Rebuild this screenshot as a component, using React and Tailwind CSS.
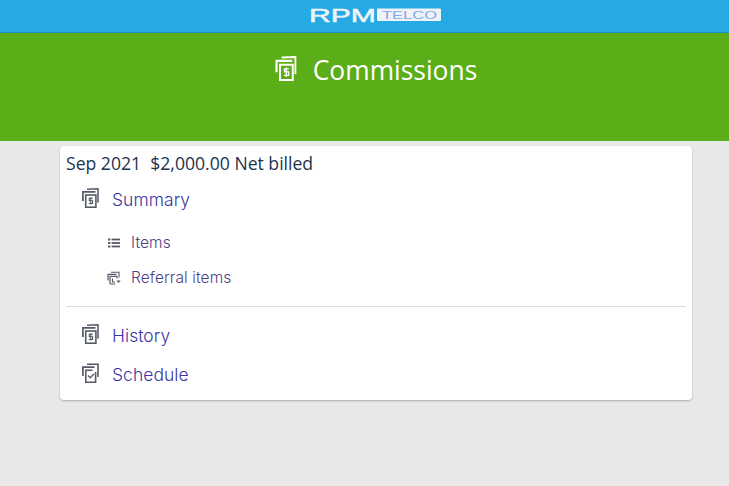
const MoneyStack = ({ className }) => (
  <svg className={className} viewBox="0 0 17 20" fill="none" stroke="currentColor">
    <path d="M5 1.2L16 0.8V14.5" strokeWidth="1.5" />
    <path d="M0.9 13V3.9H13.5" strokeWidth="1.7" />
    <rect x="3.7" y="7" width="10.2" height="12.2" strokeWidth="1.6" />
    <path d="M10.8 10.3H7.3v2.4h3.3v2.8H6.8M8.8 9.2v7.4" strokeWidth="1.1" />
  </svg>
);

const CheckStack = ({ className }) => (
  <svg className={className} viewBox="0 0 17 20" fill="none" stroke="currentColor">
    <path d="M5 1.2H16V14" strokeWidth="1.6" />
    <path d="M0.9 13V4.2H12.5" strokeWidth="1.7" />
    <path d="M13.6 9V19.2H3.8V7.2H10.5" strokeWidth="1.6" />
    <path d="M6 12.5l2.3 2.2 3.5-3.6" strokeWidth="1.4" />
  </svg>
);

const ReferralStack = ({ className }) => (
  <svg className={className} viewBox="0 0 14 14" fill="none" stroke="currentColor">
    <path d="M4 1.2H12V6.5" strokeWidth="1.1" />
    <path d="M1 9.5V3.3H9.5" strokeWidth="1.2" />
    <path d="M3 13V5.4H10V7.5M3 13H8" strokeWidth="1.2" />
    <path d="M5.5 7.5V11H8" strokeWidth="1.1" />
    <path d="M9.3 9.5H13.7L11.5 12z" fill="currentColor" stroke="none" />
  </svg>
);

const ListIcon = ({ className }) => (
  <svg className={className} viewBox="0 0 14 12" fill="currentColor">
    <rect x="1" y="1.5" width="2.4" height="2" />
    <rect x="1" y="5" width="2.4" height="2" />
    <rect x="1" y="8.5" width="2.4" height="2" />
    <rect x="4.6" y="1.6" width="8.4" height="1.8" />
    <rect x="4.6" y="5.1" width="8.4" height="1.8" />
    <rect x="4.6" y="8.6" width="8.4" height="1.8" />
  </svg>
);

const Logo = () => (
  <svg className="w-[132px] h-[24px]" viewBox="0 0 132 24">
    <text x="-1" y="18" textLength="67" lengthAdjust="spacingAndGlyphs" fill="#eef3fb" stroke="#eef3fb" strokeWidth="0.5" fontSize="19" fontFamily="Liberation Sans, sans-serif">RPM</text>
    <rect x="67" y="4.5" width="64" height="12.5" rx="1" fill="#f0f2fa" />
    <text x="72" y="15" textLength="55" lengthAdjust="spacingAndGlyphs" fill="#7faae6" fontSize="11" fontFamily="Liberation Sans, sans-serif">TELCO</text>
  </svg>
);

const MainLink = ({ icon: Icon, label }) => (
  <div className="flex items-center h-[39px] pl-[16px]">
    <Icon className="w-[17px] h-[20px] text-[#555a66] -mt-[3px]" />
    <span className="ml-[13px] pt-[2px] text-[17.4px] font-light tracking-[0.1px] text-[#3a35a0]">{label}</span>
  </div>
);

const SubLink = ({ icon: Icon, label }) => (
  <div className="flex items-center h-[35px] pl-[41px]">
    <Icon className="w-[14px] h-[14px] text-[#555a66]" />
    <span className="ml-[10px] text-[15.5px] font-light tracking-[0.1px] text-[#4f3f85]">{label}</span>
  </div>
);

export default function App() {
  return (
    <div className="min-h-[486px] bg-[#e8e8e8] font-['Inter',sans-serif]">
      <div className="flex justify-center pt-[4px] pl-[23px] h-[33px] bg-[#25aae3] border-b border-[#1d8fc4]">
        <Logo />
      </div>
      <div className="h-[108px] bg-[#5bae18] flex justify-center pt-[19px] pl-[23px]">
        <div className="flex items-start text-white">
          <MoneyStack className="w-[22px] h-[25px] mt-[4px]" />
          <span className="ml-[16px] text-[26.4px] leading-[36px] font-['Open_Sans',sans-serif]">Commissions</span>
        </div>
      </div>
      <div className="ml-[60px] mr-[37px] mt-[5px] bg-white rounded-[4px] shadow-[0_1px_2px_rgba(0,0,0,0.25)] px-[6px] pt-[6px] pb-[6px]">
        <div className="text-[17.6px] leading-[23px] pb-[5px] text-[#1c3350] font-['Open_Sans',sans-serif] whitespace-pre">Sep 2021  $2,000.00 Net billed</div>
        <MainLink icon={MoneyStack} label="Summary" />
        <div className="pt-[6px] pb-[11px]">
          <SubLink icon={ListIcon} label="Items" />
          <SubLink icon={ReferralStack} label="Referral items" />
        </div>
        <div className="border-t border-[#dcdcdc] pt-[9px]">
          <MainLink icon={MoneyStack} label="History" />
          <MainLink icon={CheckStack} label="Schedule" />
        </div>
      </div>
    </div>
  );
}
